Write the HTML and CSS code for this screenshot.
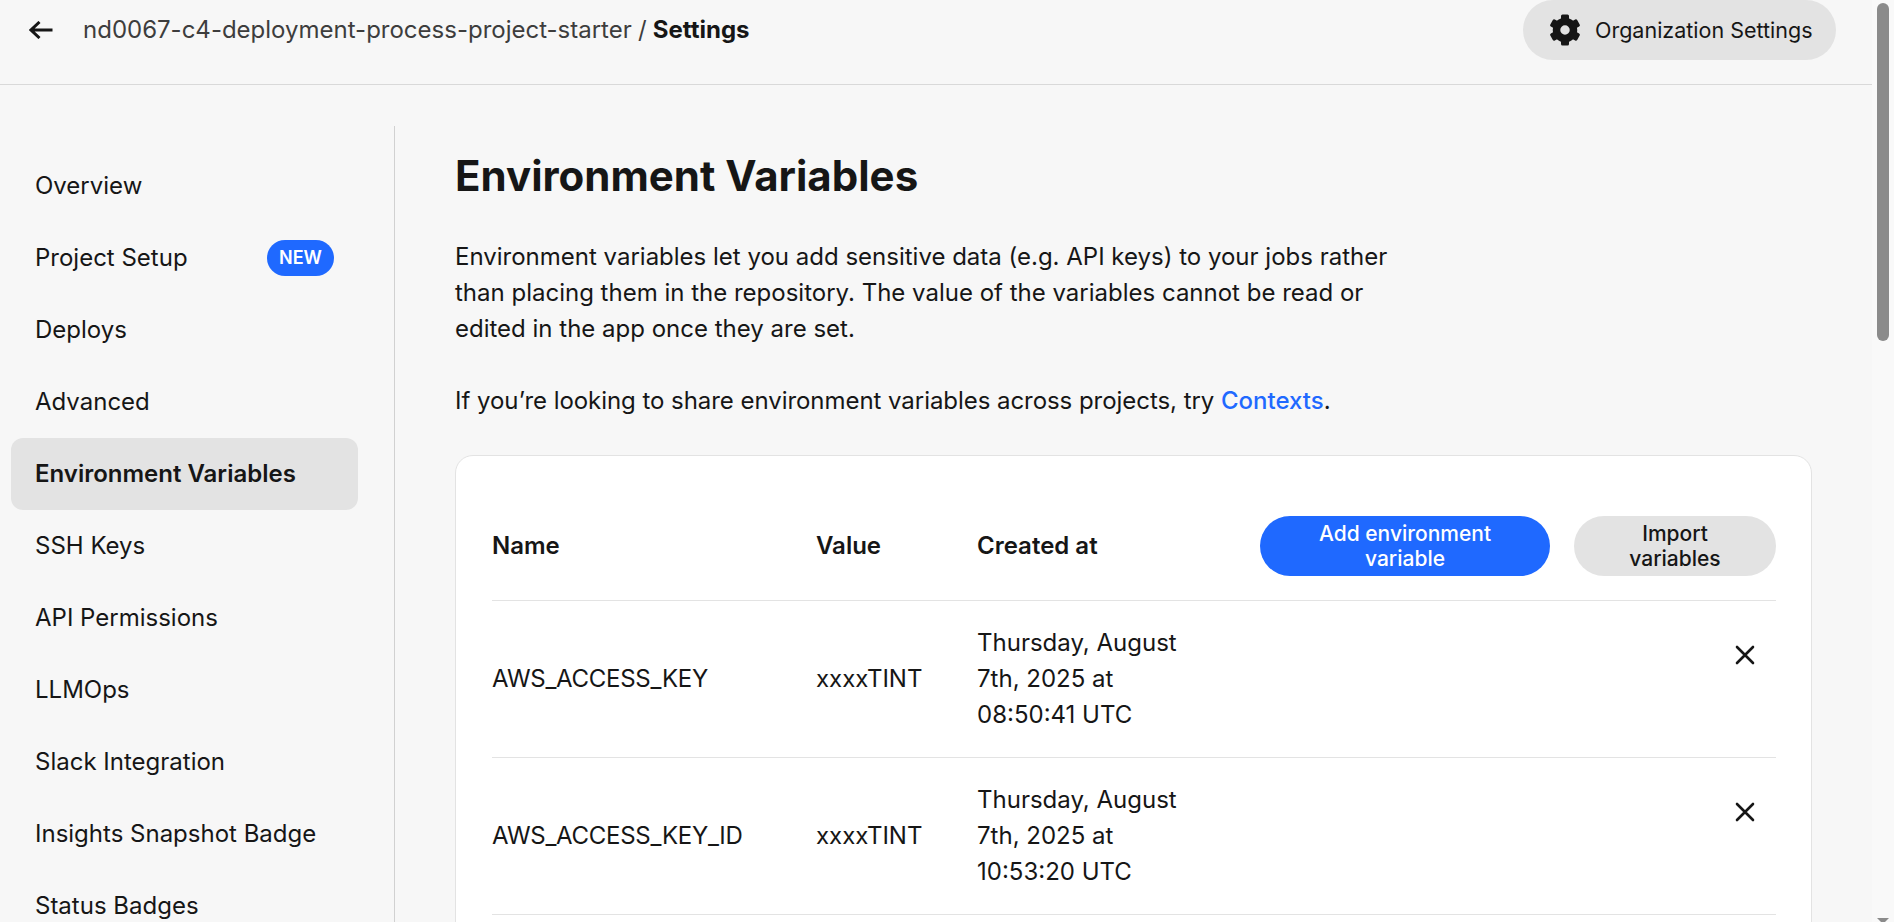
FILE: index.html
```html
<!DOCTYPE html>
<html lang="en">
<head>
  <meta charset="UTF-8" />
  <title>Project Settings</title>
  <link rel="stylesheet" href="styles.css">
</head>
<body>
  <div class="page">
    <header class="topbar">
      <div class="crumbs">
        <svg class="back" viewBox="0 0 24 18" width="24" height="18"><path d="M1.5 9H23.5M10.5 1 2 9l8.5 8" fill="none" stroke="#161616" stroke-width="3"/></svg>
        <span class="crumb-path">nd0067-c4-deployment-process-project-starter / <b>Settings</b></span>
      </div>
      <button class="org-btn">
        <svg viewBox="0 0 32 32" width="32" height="32">
          <circle cx="16" cy="16" r="8.5" fill="none" stroke="#161616" stroke-width="7.5"/>
          <g fill="#161616">
            <rect x="12" y="0.5" width="8" height="8" rx="1.5"/>
            <rect x="12" y="0.5" width="8" height="8" rx="1.5" transform="rotate(60 16 16)"/>
            <rect x="12" y="0.5" width="8" height="8" rx="1.5" transform="rotate(120 16 16)"/>
            <rect x="12" y="0.5" width="8" height="8" rx="1.5" transform="rotate(180 16 16)"/>
            <rect x="12" y="0.5" width="8" height="8" rx="1.5" transform="rotate(240 16 16)"/>
            <rect x="12" y="0.5" width="8" height="8" rx="1.5" transform="rotate(300 16 16)"/>
          </g>
        </svg>
        Organization Settings
      </button>
    </header>

    <div class="layout">
      <nav class="sidebar">
        <a class="nav-item">Overview</a>
        <a class="nav-item">Project Setup <span class="badge">NEW</span></a>
        <a class="nav-item">Deploys</a>
        <a class="nav-item">Advanced</a>
        <a class="nav-item active">Environment Variables</a>
        <a class="nav-item">SSH Keys</a>
        <a class="nav-item">API Permissions</a>
        <a class="nav-item">LLMOps</a>
        <a class="nav-item">Slack Integration</a>
        <a class="nav-item">Insights Snapshot Badge</a>
        <a class="nav-item">Status Badges</a>
      </nav>

      <main class="content">
        <h1>Environment Variables</h1>
        <p class="intro">Environment variables let you add sensitive data (e.g. API keys) to your jobs rather than placing them in the repository. The value of the variables cannot be read or edited in the app once they are set.</p>
        <p class="intro intro-tight">If you’re looking to share environment variables across projects, try <a class="link">Contexts</a>.</p>

        <section class="card">
          <table class="vars">
            <thead>
              <tr>
                <th class="col-name">Name</th>
                <th class="col-value">Value</th>
                <th class="col-created">Created at</th>
                <th>
                  <div class="actions">
                    <button class="btn btn-add">Add environment variable</button>
                    <button class="btn btn-import">Import variables</button>
                  </div>
                </th>
              </tr>
            </thead>
            <tbody>
              <tr>
                <td class="var-name">AWS_ACCESS_KEY</td>
                <td>xxxxTINT</td>
                <td>Thursday, August 7th, 2025 at 08:50:41 UTC</td>
                <td class="col-del"><svg viewBox="0 0 20 20" width="20" height="20"><path d="M2 2l16 16M18 2 2 18" stroke="#161616" stroke-width="2.6" stroke-linecap="round" fill="none"/></svg></td>
              </tr>
              <tr>
                <td class="var-name">AWS_ACCESS_KEY_ID</td>
                <td>xxxxTINT</td>
                <td>Thursday, August 7th, 2025 at 10:53:20 UTC</td>
                <td class="col-del"><svg viewBox="0 0 20 20" width="20" height="20"><path d="M2 2l16 16M18 2 2 18" stroke="#161616" stroke-width="2.6" stroke-linecap="round" fill="none"/></svg></td>
              </tr>
            </tbody>
          </table>
        </section>
      </main>
    </div>
  </div>
  <div class="scrollbar"><div class="thumb"></div><div class="arrow"></div></div>
</body>
</html>
```

FILE: styles.css
```css
html, body { margin: 0; height: 100%; overflow: hidden; }
body {
  display: flex;
  font-family: Inter, "Liberation Sans", sans-serif;
  font-size: 24px;
  line-height: 36px;
  color: #161616;
  background: #f7f7f7;
}
.page { width: 1872px; flex: none; height: 922px; overflow: hidden; }

.topbar {
  height: 84px;
  border-bottom: 1px solid #d9d9d9;
  display: flex;
  justify-content: space-between;
  padding: 0 36px 0 29px;
}
.crumbs { display: flex; align-items: center; height: 60px; gap: 30px; }
.crumb-path { color: #3d3d3d; word-spacing: -0.6px; }
.crumb-path b { color: #161616; font-weight: 700; }
.org-btn {
  height: 60px;
  width: 313px;
  border: 0;
  border-radius: 30px;
  background: #e3e3e3;
  color: #161616;
  font: inherit;
  font-size: 21.5px;
  display: flex;
  align-items: center;
  gap: 14px;
  padding: 0 0 0 26px;
}

.layout { display: flex; align-items: flex-start; padding-top: 41px; }
.sidebar {
  width: 383px;
  flex: none;
  padding: 24px 0 0 11px;
  border-right: 1px solid #d1d1d1;
  height: 800px;
}
.nav-item {
  width: 347px;
  height: 72px;
  box-sizing: border-box;
  padding: 0 24px;
  display: flex;
  align-items: center;
  justify-content: space-between;
  border-radius: 12px;
}
.nav-item.active { background: #e3e3e3; font-weight: 600; }
.badge {
  width: 67px;
  height: 36px;
  border-radius: 18px;
  background: #1f69ff;
  color: #fff;
  font-size: 18px;
  font-weight: 600;
  line-height: 36px;
  text-align: center;
}

.content { flex: 1; padding: 0 60px; }
h1 { margin: 23px 0 0; font-size: 42px; line-height: 54px; font-weight: 700; }
.intro { margin: 0 0 36px; max-width: 945px; }
h1 + .intro { margin-top: 36px; }
.intro-tight { letter-spacing: -0.05px; }
.link { color: #1f69ff; font-weight: 500; letter-spacing: 0; }

.card {
  background: #fff;
  border: 1px solid #e3e3e3;
  border-radius: 18px;
  padding: 60px 35px 120px 36px;
}
.vars { width: 100%; border-collapse: collapse; table-layout: fixed; }
.vars th { text-align: left; font-weight: 600; padding: 0 0 24px; vertical-align: middle; }
.vars td { padding: 24px 0; vertical-align: middle; }
.vars tr { border-bottom: 1px solid #e3e3e3; }
.col-name { width: 324px; }
.col-value { width: 161px; }
.col-created { width: 240px; }
.vars td:nth-child(3) { padding-right: 20px; }
.vars td.var-name { letter-spacing: -0.28px; }
.actions { display: flex; justify-content: flex-end; gap: 24px; }
.btn {
  height: 60px;
  border: 0;
  border-radius: 30px;
  font: inherit;
  font-size: 21px;
  line-height: 25px;
  font-weight: 500;
  padding: 0 24px 1px;
}
.btn-add { width: 290px; background: #1f69ff; color: #fff; }
.btn-import { width: 202px; background: #e3e3e3; color: #161616; }
.vars td.col-del { vertical-align: top; padding: 44px 21px 0 0; }
.col-del svg { display: block; margin-left: auto; }

.scrollbar {
  width: 22px;
  flex: none;
  background: #f9f9f9;
  height: 922px;
  padding: 3px 5px 0;
  box-sizing: border-box;
  overflow: hidden;
  display: flex;
  flex-direction: column;
  justify-content: space-between;
}
.thumb { width: 12px; height: 338px; border-radius: 6px; background: #8b8b8b; }
.arrow {
  width: 0;
  height: 0;
  margin-bottom: -2px;
  border-left: 6px solid transparent;
  border-right: 6px solid transparent;
  border-top: 6px solid #8b8b8b;
}
```
